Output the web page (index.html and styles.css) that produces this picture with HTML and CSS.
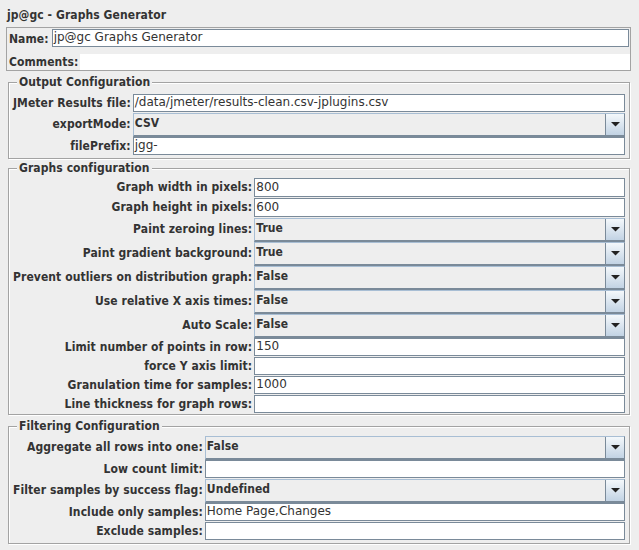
FILE: index.html
```html
<!DOCTYPE html>
<html lang="en">
<head>
<meta charset="utf-8">
<title>jp@gc - Graphs Generator</title>
<link rel="stylesheet" href="styles.css">
</head>
<body>
<div class="panel">
  <div class="title">jp@gc - Graphs Generator</div>

  <div class="namebox">
    <div class="name-row">
      <span class="lbl">Name:</span>
      <div class="field field-name">jp@gc Graphs Generator</div>
    </div>
    <div class="comments-row">
      <span class="lbl">Comments:</span>
      <div class="comments-area"></div>
    </div>
  </div>

  <section class="group group-output">
    <div class="group-title">Output Configuration</div>
    <div class="form">
      <span class="lbl">JMeter Results file:</span>
      <div class="field">/data/jmeter/results-clean.csv-jplugins.csv</div>
      <span class="lbl">exportMode:</span>
      <div class="combo"><span class="combo-value">CSV</span><span class="combo-btn"><svg width="9" height="5" viewBox="0 0 9 5"><polygon points="0,0 9,0 4.5,4.5" fill="#222"/></svg></span></div>
      <span class="lbl">filePrefix:</span>
      <div class="field">jgg-</div>
    </div>
  </section>

  <section class="group group-graphs">
    <div class="group-title">Graphs configuration</div>
    <div class="form">
      <span class="lbl">Graph width in pixels:</span>
      <div class="field field-tall">800</div>
      <span class="lbl">Graph height in pixels:</span>
      <div class="field field-tall">600</div>
      <span class="lbl">Paint zeroing lines:</span>
      <div class="combo"><span class="combo-value">True</span><span class="combo-btn"><svg width="9" height="5" viewBox="0 0 9 5"><polygon points="0,0 9,0 4.5,4.5" fill="#222"/></svg></span></div>
      <span class="lbl">Paint gradient background:</span>
      <div class="combo"><span class="combo-value">True</span><span class="combo-btn"><svg width="9" height="5" viewBox="0 0 9 5"><polygon points="0,0 9,0 4.5,4.5" fill="#222"/></svg></span></div>
      <span class="lbl">Prevent outliers on distribution graph:</span>
      <div class="combo"><span class="combo-value">False</span><span class="combo-btn"><svg width="9" height="5" viewBox="0 0 9 5"><polygon points="0,0 9,0 4.5,4.5" fill="#222"/></svg></span></div>
      <span class="lbl">Use relative X axis times:</span>
      <div class="combo"><span class="combo-value">False</span><span class="combo-btn"><svg width="9" height="5" viewBox="0 0 9 5"><polygon points="0,0 9,0 4.5,4.5" fill="#222"/></svg></span></div>
      <span class="lbl">Auto Scale:</span>
      <div class="combo"><span class="combo-value">False</span><span class="combo-btn"><svg width="9" height="5" viewBox="0 0 9 5"><polygon points="0,0 9,0 4.5,4.5" fill="#222"/></svg></span></div>
      <span class="lbl">Limit number of points in row:</span>
      <div class="field">150</div>
      <span class="lbl">force Y axis limit:</span>
      <div class="field"></div>
      <span class="lbl">Granulation time for samples:</span>
      <div class="field">1000</div>
      <span class="lbl">Line thickness for graph rows:</span>
      <div class="field"></div>
    </div>
  </section>

  <section class="group group-filter">
    <div class="group-title">Filtering Configuration</div>
    <div class="form">
      <span class="lbl">Aggregate all rows into one:</span>
      <div class="combo"><span class="combo-value">False</span><span class="combo-btn"><svg width="9" height="5" viewBox="0 0 9 5"><polygon points="0,0 9,0 4.5,4.5" fill="#222"/></svg></span></div>
      <span class="lbl">Low count limit:</span>
      <div class="field"></div>
      <span class="lbl">Filter samples by success flag:</span>
      <div class="combo"><span class="combo-value">Undefined</span><span class="combo-btn"><svg width="9" height="5" viewBox="0 0 9 5"><polygon points="0,0 9,0 4.5,4.5" fill="#222"/></svg></span></div>
      <span class="lbl">Include only samples:</span>
      <div class="field">Home Page,Changes</div>
      <span class="lbl">Exclude samples:</span>
      <div class="field"></div>
    </div>
  </section>
</div>
</body>
</html>
```

FILE: styles.css
```css
html, body {
  margin: 0;
  padding: 0;
  background: #eeeeee;
}

body {
  font-family: "DejaVu Sans", "Liberation Sans", sans-serif;
  font-size: 12px;
  color: #333333;
}

.panel {
  padding-top: 8px;
  width: 639px;
  height: 542px;
}

.title,
.lbl,
.group-title,
.combo {
  font-family: "DejaVu Sans Condensed", "DejaVu Sans", sans-serif;
  font-weight: bold;
  font-size: 12px;
  letter-spacing: 0.08px;
}

.title {
  line-height: 14px;
  padding-left: 7px;
  margin-bottom: 5px;
}

.lbl {
  line-height: 14px;
  white-space: nowrap;
}

/* Name / comments box */
.namebox {
  margin-left: 6px;
  width: 625px;
  box-sizing: border-box;
  border: 1px solid #a3a3a3;
  padding: 1px 0 0 2px;
}

.name-row {
  display: flex;
  align-items: center;
  gap: 3px;
}

.field-name {
  flex: 1;
  margin-right: 1px;
}

.comments-row {
  display: flex;
  align-items: center;
  margin-top: 6px;
}

.comments-area {
  flex: 1;
  height: 16px;
  margin-left: 2px;
  background: #ffffff;
}

/* Titled groups (etched border) */
.group {
  margin: 11px 9px 0 8px;
  border: 1px solid #a3a3a3;
  box-shadow: 1px 1px 0 #ffffff, inset 1px 1px 0 #ffffff;
  padding: 0 4px 2px 4px;
}

.group-graphs {
  margin-top: 9px;
  padding-bottom: 0;
}

.group-title {
  line-height: 14px;
  margin: -8px 0 3px 4px;
  padding: 0 2px;
  width: fit-content;
  background: #eeeeee;
}

.group-output .group-title {
  margin-bottom: 5px;
}

.form {
  display: grid;
  grid-template-columns: auto 1fr;
  column-gap: 2px;
  align-items: start;
}

.form .lbl {
  justify-self: end;
  align-self: center;
  padding-bottom: 2px;
}

/* Text field */
.field {
  height: 18px;
  box-sizing: border-box;
  border: 1px solid #7a8a99;
  background: #ffffff;
  padding-left: 1px;
  line-height: 15px;
  margin-bottom: 1px;
  white-space: nowrap;
  overflow: hidden;
  font-weight: normal;
}

.field-tall {
  height: 19px;
  line-height: 16px;
}

/* Combo box */
.combo {
  height: 24px;
  box-sizing: border-box;
  display: flex;
  border-style: solid;
  border-width: 1px 1px 2px 1px;
  border-color: #a8bed4 #7a8a99 #7a8a99 #a8bed4;
  background: #eeeeee;
}

.combo-value {
  flex: 1;
  padding-left: 1px;
  line-height: 19px;
}

.combo-btn {
  width: 18px;
  border-left: 1px solid #7a8a99;
  background: linear-gradient(#f4f8fb, #c2d3e4);
  display: flex;
  align-items: center;
  justify-content: center;
}

.combo-btn svg {
  display: block;
}
```
